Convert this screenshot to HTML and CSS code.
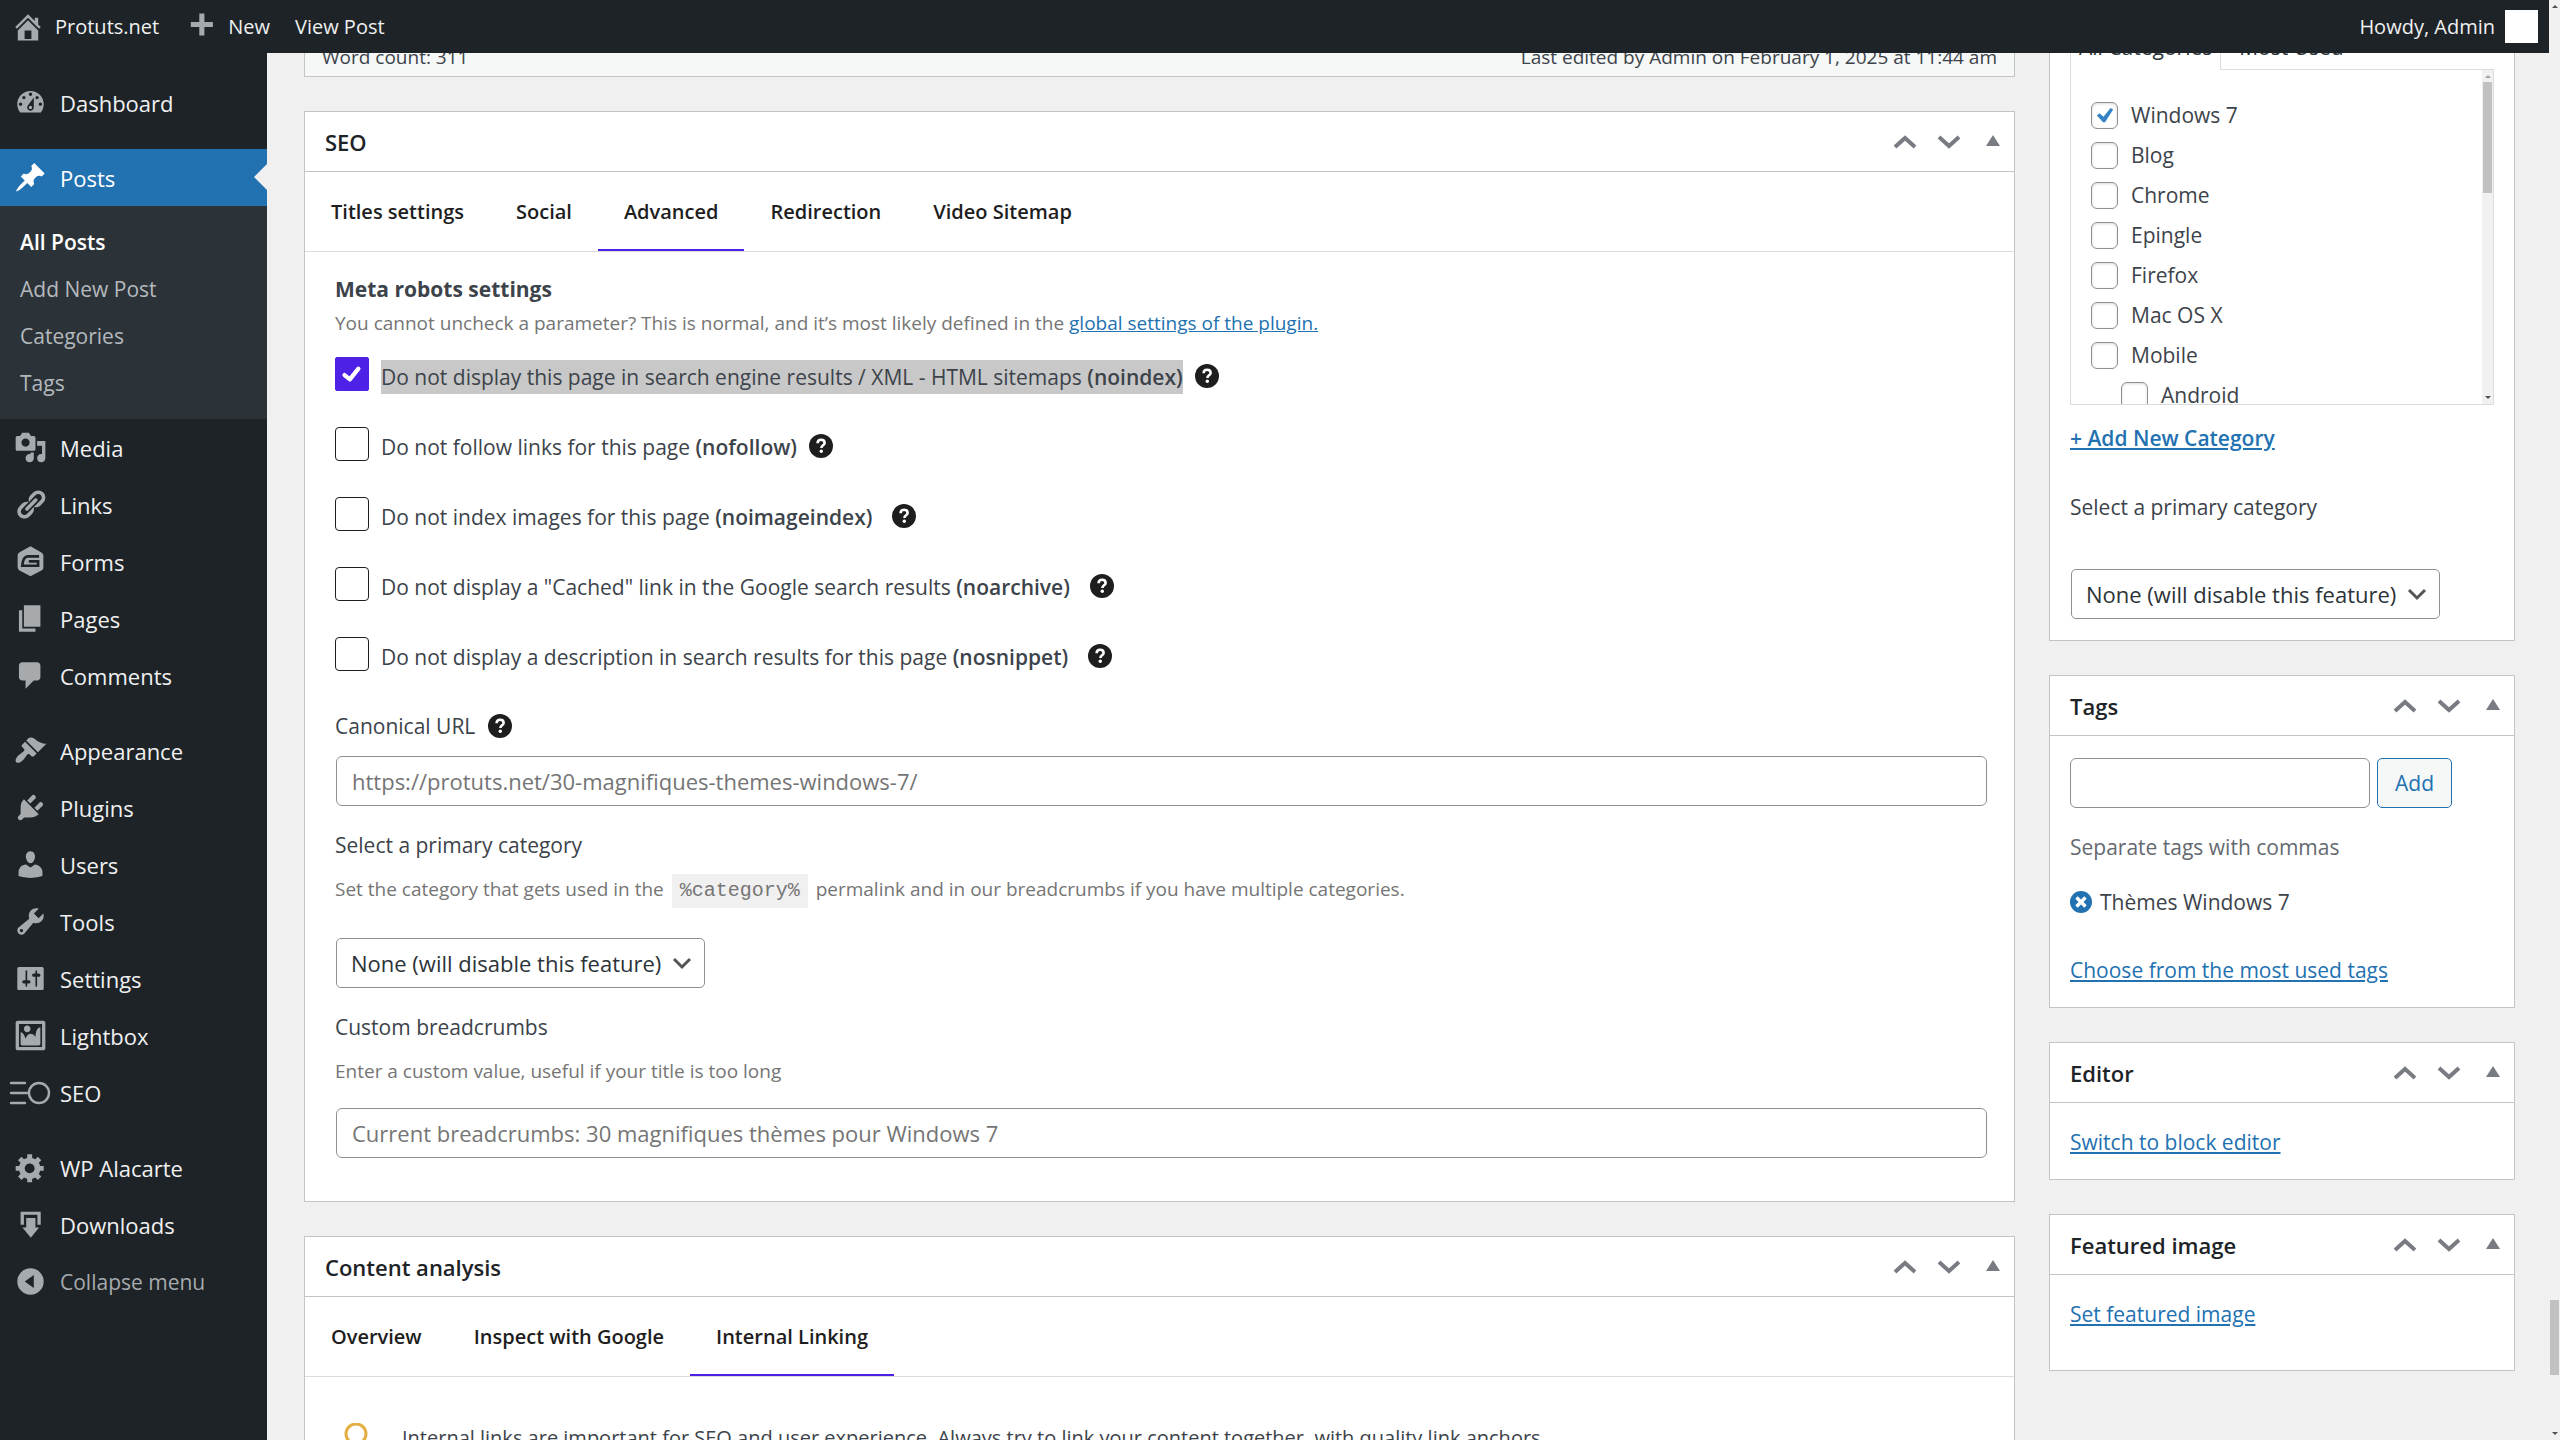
FILE: index.html
```html
<!DOCTYPE html>
<html lang="en">

<head>
    <meta charset="UTF-8">
    <meta name="viewport" content="width=device-width, initial-scale=1.0">
    <title>Edit Post</title>
    <link rel="stylesheet" href="styles.css">
</head>

<body>
    <!-- Shared icons for the panel headers and help buttons -->
    <svg class="sprite" aria-hidden="true">
        <symbol id="i-up" viewBox="0 0 24 24"><path d="M2 17l10-9 10 9" fill="none" stroke="#787c82" stroke-width="4"/></symbol>
        <symbol id="i-down" viewBox="0 0 24 24"><path d="M2 7l10 9 10-9" fill="none" stroke="#787c82" stroke-width="4"/></symbol>
        <symbol id="i-toggle" viewBox="0 0 24 24"><path d="M12 5l7 11H5z" fill="#787c82"/></symbol>
        <symbol id="i-help" viewBox="0 0 24 24"><circle cx="12" cy="12" r="12" fill="#1e1e1e"/><path d="M8.600 9.200c0-2 1.500-3.400 3.500-3.400s3.500 1.300 3.500 3.100c0 2.500-3.200 2.400-3.200 5.100" fill="none" stroke="#fff" stroke-width="2.600"/><circle cx="12.300" cy="17.300" r="1.700" fill="#fff"/></symbol>
    </svg>

    <header class="adminbar">
        <a href="#" class="bar-item"><svg class="bar-icon" viewBox="0 0 20 20"><path d="M16 8.500l1.530 1.530-1.060 1.060L10 4.600l-6.470 6.490-1.060-1.060L10 2.500l4 4v-2h2v4zm-6-2.460l6 5.990V18H4v-5.970zM12 17v-5H8v5h4z"/></svg>Protuts.net</a>
        <a href="#" class="bar-item"><svg class="bar-icon" viewBox="0 0 20 20"><path d="M17 7v3h-5v5H9v-5H4V7h5V2h3v5h5z"/></svg>New</a>
        <a href="#" class="bar-item">View Post</a>
        <a href="#" class="bar-item bar-user">Howdy, Admin<span class="avatar"></span></a>
    </header>

    <nav class="sidebar">
        <a href="#" class="menu-item"><svg class="menu-icon" viewBox="0 0 20 20"><path fill-rule="evenodd" d="M3.760 16h12.480c1.100-1.370 1.760-3.110 1.760-5 0-4.420-3.580-8-8-8s-8 3.580-8 8c0 1.890.66 3.630 1.760 5zM10 4c.55 0 1 .45 1 1s-.45 1-1 1-1-.45-1-1 .45-1 1-1zM6 6c.55 0 1 .45 1 1s-.45 1-1 1-1-.45-1-1 .45-1 1-1zm8 0c.55 0 1 .45 1 1s-.45 1-1 1-1-.45-1-1 .45-1 1-1zm-5.370 5.550L12 7v6c0 1.100-.9 2-2 2s-2-.9-2-2c0-.57.24-1.080.63-1.450zM4 10c.55 0 1 .45 1 1s-.45 1-1 1-1-.45-1-1 .45-1 1-1zm12 0c.55 0 1 .45 1 1s-.45 1-1 1-1-.45-1-1 .45-1 1-1zm-5 3c0-.55-.45-1-1-1s-1 .45-1 1 .45 1 1 1 1-.45 1-1z"/></svg>Dashboard</a>
        <div class="separator"></div>
        <a href="#" class="menu-item current"><svg class="menu-icon" viewBox="0 0 20 20"><path d="M10.440 3.020l1.820-1.820 6.360 6.350-1.830 1.820c-1.050-.68-2.480-.57-3.410.36l-.75.75c-.92.93-1.040 2.350-.35 3.410l-1.830 1.820-2.410-2.410-2.800 2.790c-.42.42-3.380 2.710-3.800 2.290s1.860-3.390 2.280-3.810l2.790-2.790L4.100 9.360l1.830-1.820c1.050.69 2.480.57 3.400-.36l.75-.75c.93-.92 1.050-2.350.36-3.410z"/></svg>Posts</a>
        <div class="submenu">
            <a href="#" class="active">All Posts</a>
            <a href="#">Add New Post</a>
            <a href="#">Categories</a>
            <a href="#">Tags</a>
        </div>
        <a href="#" class="menu-item"><svg class="menu-icon" viewBox="0 0 20 20"><path d="M13 11V4c0-.55-.45-1-1-1h-1.670L9 1H5L3.670 3H2c-.55 0-1 .45-1 1v7c0 .55.45 1 1 1h10c.55 0 1-.45 1-1zM7 4.500c1.380 0 2.500 1.120 2.500 2.500S8.380 9.500 7 9.500 4.500 8.380 4.500 7 5.620 4.500 7 4.500zM14 6h5v10.500c0 1.380-1.120 2.500-2.500 2.500S14 17.880 14 16.500s1.120-2.500 2.500-2.500c.17 0 .34.02.5.05V9h-3V6zm-4 8.050V13h2v3.500c0 1.380-1.120 2.500-2.500 2.500S7 17.880 7 16.500 8.120 14 9.500 14c.17 0 .34.02.5.05z"/></svg>Media</a>
        <a href="#" class="menu-item"><svg class="menu-icon" viewBox="0 0 20 20"><path d="M17.740 2.760c1.680 1.690 1.680 4.410 0 6.100l-1.530 1.520c-1.120 1.120-2.700 1.470-4.140 1.090l2.620-2.610.76-.77.76-.76c.84-.84.84-2.200 0-3.040-.84-.85-2.200-.85-3.040 0l-.77.76-3.380 3.380c-.37-1.440-.02-3.020 1.100-4.140l1.520-1.530c1.690-1.680 4.420-1.680 6.100 0zM8.590 13.430l5.340-5.340c.42-.42.42-1.100 0-1.520-.44-.43-1.130-.39-1.530 0l-5.330 5.340c-.42.42-.42 1.100 0 1.520.44.43 1.130.39 1.520 0zm-.76 2.290l4.140-4.150c.38 1.440.03 3.020-1.090 4.140l-1.520 1.530c-1.690 1.680-4.410 1.680-6.100 0-1.680-1.680-1.680-4.420 0-6.100l1.530-1.520c1.120-1.120 2.700-1.470 4.140-1.100l-4.140 4.150c-.85.84-.85 2.200 0 3.050.84.84 2.200.84 3.040 0z"/></svg>Links</a>
        <a href="#" class="menu-item"><svg class="menu-icon" viewBox="0 0 20 20"><path d="M10 .8l6.600 3.700c.8.500 1.200 1.100 1.200 2v7c0 .9-.4 1.500-1.200 2L10 19l-6.600-3.600c-.8-.5-1.200-1.100-1.200-2v-7c0-.9.4-1.500 1.200-2z"/><path d="M15.200 6.900H8.400C6.300 6.900 5.300 9 5 12.600h9.600V9.900H9" fill="none" stroke="#1d2327" stroke-width="1.600"/></svg>Forms</a>
        <a href="#" class="menu-item"><svg class="menu-icon" viewBox="0 0 20 20"><path d="M6 15V2h10v13H6zm-1 1h8v2H3V5h2v11z"/></svg>Pages</a>
        <a href="#" class="menu-item"><svg class="menu-icon" viewBox="0 0 20 20"><path d="M5 2h9c1.100 0 2 .9 2 2v7c0 1.100-.9 2-2 2h-2l-5 5v-5H5c-1.100 0-2-.9-2-2V4c0-1.100.9-2 2-2z"/></svg>Comments</a>
        <div class="separator"></div>
        <a href="#" class="menu-item"><svg class="menu-icon" viewBox="0 0 20 20"><path d="M14.480 11.060L7.410 3.990l1.500-1.500c.5-.56 2.300-.47 3.510.32 1.210.8 1.430 1.280 2.910 2.100 1.180.64 2.450 1.260 4.450.85zm-.71.71L6.700 4.700 4.930 6.470c-.39.39-.39 1.020 0 1.410l1.060 1.060c.39.39.39 1.030 0 1.420-.6.6-1.430 1.110-2.210 1.690-.35.26-.7.53-1.010.84C1.430 14.230.4 16.080 1.400 17.070c.99 1 2.840-.03 4.180-1.360.31-.31.58-.66.85-1.020.57-.78 1.080-1.610 1.690-2.210.39-.39 1.020-.39 1.410 0l1.060 1.060c.39.39 1.020.39 1.410 0z"/></svg>Appearance</a>
        <a href="#" class="menu-item"><svg class="menu-icon" viewBox="0 0 20 20"><path d="M13.110 4.360L9.870 7.600 8 5.730l3.240-3.240c.35-.34 1.050-.2 1.560.32.52.51.66 1.210.31 1.550zm-8 1.770l.91-1.120 9.010 9.010-1.190.84c-.71.71-2.630 1.160-3.820 1.160H6.140L4.900 17.260c-.59.59-1.540.59-2.120 0-.59-.58-.59-1.530 0-2.120l1.240-1.240v-3.880c0-1.130.4-3.190 1.090-3.890zm7.260 3.970l3.240-3.240c.34-.35 1.040-.21 1.550.31.52.51.66 1.210.31 1.550l-3.240 3.250z"/></svg>Plugins</a>
        <a href="#" class="menu-item"><svg class="menu-icon" viewBox="0 0 20 20"><path d="M10 9.250c-2.270 0-2.730-3.440-2.730-3.440C7 4.020 7.820 2 9.970 2c2.160 0 2.980 2.020 2.710 3.810 0 0-.41 3.440-2.680 3.440zm0 2.570L12.720 10c2.390 0 4.520 2.330 4.520 4.530v2.490s-3.650 1.130-7.240 1.130c-3.650 0-7.240-1.130-7.240-1.130v-2.490c0-2.250 1.940-4.480 4.470-4.480z"/></svg>Users</a>
        <a href="#" class="menu-item"><svg class="menu-icon" viewBox="0 0 20 20"><path fill-rule="evenodd" d="M16.680 9.770c-1.340 1.340-3.300 1.670-4.950.99l-5.410 6.520c-.99.99-2.590.99-3.580 0s-.99-2.590 0-3.570l6.520-5.420c-.68-1.650-.35-3.610.99-4.950 1.280-1.280 3.120-1.620 4.720-1.060l-2.890 2.890 2.820 2.820 2.860-2.870c.53 1.580.18 3.390-1.080 4.650zM3.810 16.210c.4.39 1.040.39 1.430 0 .4-.4.4-1.040 0-1.430-.39-.4-1.030-.4-1.430 0-.39.39-.39 1.030 0 1.430z"/></svg>Tools</a>
        <a href="#" class="menu-item"><svg class="menu-icon" viewBox="0 0 20 20"><path fill-rule="evenodd" d="M18 16V4c0-.55-.45-1-1-1H3c-.55 0-1 .45-1 1v12c0 .55.45 1 1 1h14c.55 0 1-.45 1-1zM8 11h1c.55 0 1 .45 1 1s-.45 1-1 1H8v1.500c0 .28-.22.5-.5.5s-.5-.22-.5-.5V13H6c-.55 0-1-.45-1-1s.45-1 1-1h1V5.500c0-.28.22-.5.5-.5s.5.22.5.5V11zm5-2h-1c-.55 0-1-.45-1-1s.45-1 1-1h1V5.500c0-.28.22-.5.5-.5s.5.22.5.5V7h1c.55 0 1 .45 1 1s-.45 1-1 1h-1v5.500c0 .28-.22.5-.5.5s-.5-.22-.5-.5V9z"/></svg>Settings</a>
        <a href="#" class="menu-item"><svg class="menu-icon" viewBox="0 0 20 20"><path fill-rule="evenodd" d="M2.250 1h15.500c.69 0 1.250.56 1.250 1.250v15.500c0 .69-.56 1.250-1.250 1.250H2.250C1.560 19 1 18.440 1 17.750V2.250C1 1.560 1.560 1 2.250 1zM17 17V3H3v14h14z"/><path d="M10 6c0-1.100-.9-2-2-2s-2 .9-2 2 .9 2 2 2 2-.9 2-2zm3 5s0-6 3-6v10c0 .55-.45 1-1 1H5c-.55 0-1-.45-1-1V8c2 0 3 4 3 4s1-3 3-3 3 2 3 2z"/></svg>Lightbox</a>
        <a href="#" class="menu-item menu-seo"><svg class="seo-icon" viewBox="0 0 42 24"><g fill="none" stroke="#a7aaad" stroke-width="2.400" stroke-linecap="round"><path d="M2 2h14M2 12h17M2 22h14"/><circle cx="30" cy="12" r="10"/></g></svg>SEO</a>
        <div class="separator"></div>
        <a href="#" class="menu-item"><svg class="menu-icon" viewBox="0 0 20 20"><path fill-rule="evenodd" d="M18 12h-2.180c-.17.7-.44 1.350-.81 1.930l1.540 1.540-2.100 2.100-1.540-1.540c-.58.36-1.230.63-1.910.79V19H8v-2.180c-.68-.16-1.330-.43-1.910-.79l-1.540 1.540-2.120-2.120 1.540-1.540c-.36-.58-.63-1.230-.79-1.910H1V9.030h2.170c.16-.7.44-1.350.8-1.940L2.430 5.550l2.100-2.100 1.540 1.540c.58-.37 1.240-.64 1.930-.81V2h3v2.180c.68.16 1.330.43 1.910.79l1.540-1.540 2.120 2.120-1.540 1.540c.36.59.64 1.240.8 1.940H18V12zm-8.500 1.500c1.660 0 3-1.340 3-3s-1.340-3-3-3-3 1.340-3 3 1.340 3 3 3z"/></svg>WP Alacarte</a>
        <a href="#" class="menu-item"><svg class="menu-icon" viewBox="0 0 20 20"><path d="M4 2.200h12.200v8h-2V4.100H6v6.100H4z"/><path d="M7.400 6H13v5.800h2.200L10.200 18l-5.100-6.200h2.300z"/></svg>Downloads</a>
        <button type="button" class="menu-item collapse"><svg class="menu-icon" viewBox="0 0 20 20"><path fill-rule="evenodd" d="M10 2a8 8 0 100 16 8 8 0 000-16zM12 6v8l-5.500-4z"/></svg>Collapse menu</button>
    </nav>

    <main class="content">
        <div class="main-column">
            <div class="status-bar"><span>Word count: 311</span><span>Last edited by Admin on February 1, 2025 at 11:44 am</span></div>

            <section class="panel">
                <div class="panel-header">
                    <h2>SEO</h2>
                    <button type="button" aria-label="Move up"><svg><use href="#i-up"/></svg></button>
                    <button type="button" aria-label="Move down"><svg><use href="#i-down"/></svg></button>
                    <button type="button" aria-label="Toggle panel"><svg><use href="#i-toggle"/></svg></button>
                </div>
                <div class="tabs">
                    <a href="#">Titles settings</a>
                    <a href="#">Social</a>
                    <a href="#" class="selected">Advanced</a>
                    <a href="#">Redirection</a>
                    <a href="#">Video Sitemap</a>
                </div>
                <div class="seo-body">
                    <h3>Meta robots settings</h3>
                    <p class="hint">You cannot uncheck a parameter? This is normal, and it’s most likely defined in the <a href="#">global settings of the plugin.</a></p>

                    <div class="robots">
                        <div class="robot-row">
                            <input type="checkbox" id="noindex" checked>
                            <label for="noindex" class="highlight">Do not display this page in search engine results / XML - HTML sitemaps <strong>(noindex)</strong></label>
                            <button type="button" class="help" aria-label="Help"><svg><use href="#i-help"/></svg></button>
                        </div>
                        <div class="robot-row">
                            <input type="checkbox" id="nofollow">
                            <label for="nofollow">Do not follow links for this page <strong>(nofollow)</strong></label>
                            <button type="button" class="help" aria-label="Help"><svg><use href="#i-help"/></svg></button>
                        </div>
                        <div class="robot-row wide">
                            <input type="checkbox" id="noimageindex">
                            <label for="noimageindex">Do not index images for this page <strong>(noimageindex)</strong></label>
                            <button type="button" class="help" aria-label="Help"><svg><use href="#i-help"/></svg></button>
                        </div>
                        <div class="robot-row wide">
                            <input type="checkbox" id="noarchive">
                            <label for="noarchive">Do not display a "Cached" link in the Google search results <strong>(noarchive)</strong></label>
                            <button type="button" class="help" aria-label="Help"><svg><use href="#i-help"/></svg></button>
                        </div>
                        <div class="robot-row wide">
                            <input type="checkbox" id="nosnippet">
                            <label for="nosnippet">Do not display a description in search results for this page <strong>(nosnippet)</strong></label>
                            <button type="button" class="help" aria-label="Help"><svg><use href="#i-help"/></svg></button>
                        </div>
                    </div>

                    <div class="field canonical">
                        <div class="label-row">
                            <label for="canonical">Canonical URL</label>
                            <button type="button" class="help" aria-label="Help"><svg><use href="#i-help"/></svg></button>
                        </div>
                        <input type="text" id="canonical" placeholder="https://protuts.net/30-magnifiques-themes-windows-7/">
                    </div>
                    <div class="field primary">
                        <label for="primary">Select a primary category</label>
                        <p class="hint">Set the category that gets used in the <code>%category%</code> permalink and in our breadcrumbs if you have multiple categories.</p>
                        <select id="primary"><option>None (will disable this feature)</option></select>
                    </div>
                    <div class="field breadcrumbs">
                        <label for="breadcrumbs">Custom breadcrumbs</label>
                        <p class="hint">Enter a custom value, useful if your title is too long</p>
                        <input type="text" id="breadcrumbs" placeholder="Current breadcrumbs: 30 magnifiques thèmes pour Windows 7">
                    </div>
                </div>
            </section>

            <section class="panel">
                <div class="panel-header">
                    <h2>Content analysis</h2>
                    <button type="button" aria-label="Move up"><svg><use href="#i-up"/></svg></button>
                    <button type="button" aria-label="Move down"><svg><use href="#i-down"/></svg></button>
                    <button type="button" aria-label="Toggle panel"><svg><use href="#i-toggle"/></svg></button>
                </div>
                <div class="tabs">
                    <a href="#">Overview</a>
                    <a href="#">Inspect with Google</a>
                    <a href="#" class="selected">Internal Linking</a>
                </div>
                <div class="notice">
                    <svg class="bulb" viewBox="0 0 24 34"><path d="M8 24v-4c-4-2-6-5-6-9a10 10 0 0120 0c0 4-2 7-6 9v4zM8 29h8" fill="none" stroke="#e5ae43" stroke-width="3"/></svg>
                    <p>Internal links are important for SEO and user experience. Always try to link your content together, with quality link anchors.</p>
                </div>
            </section>
        </div>

        <aside class="side-column">
            <section class="panel categories">
                <div class="cat-tabs">
                    <a href="#" class="selected">All Categories</a>
                    <a href="#">Most Used</a>
                </div>
                <div class="cat-box">
                    <div class="cat-list">
                        <label><input type="checkbox" checked>Windows 7</label>
                        <label><input type="checkbox">Blog</label>
                        <label><input type="checkbox">Chrome</label>
                        <label><input type="checkbox">Epingle</label>
                        <label><input type="checkbox">Firefox</label>
                        <label><input type="checkbox">Mac OS X</label>
                        <label><input type="checkbox">Mobile</label>
                        <label class="child"><input type="checkbox">Android</label>
                    </div>
                    <div class="scrollbar">
                        <span class="arrow arrow-up"></span>
                        <span class="thumb"></span>
                        <span class="arrow arrow-down"></span>
                    </div>
                </div>
                <a href="#" class="add-category">+ Add New Category</a>
                <label for="side-primary" class="side-label">Select a primary category</label>
                <select id="side-primary"><option>None (will disable this feature)</option></select>
            </section>

            <section class="panel">
                <div class="panel-header">
                    <h2>Tags</h2>
                    <button type="button" aria-label="Move up"><svg><use href="#i-up"/></svg></button>
                    <button type="button" aria-label="Move down"><svg><use href="#i-down"/></svg></button>
                    <button type="button" aria-label="Toggle panel"><svg><use href="#i-toggle"/></svg></button>
                </div>
                <div class="side-body">
                    <div class="tag-form">
                        <input type="text" aria-label="Add new tag">
                        <button type="button">Add</button>
                    </div>
                    <p class="tag-hint">Separate tags with commas</p>
                    <div class="tag">
                        <button type="button" aria-label="Remove tag"><svg viewBox="0 0 22 22"><circle cx="11" cy="11" r="11" fill="#2271b1"/><path d="M6.500 6.500l9 9M15.500 6.500l-9 9" stroke="#fff" stroke-width="3.400"/></svg></button>
                        Thèmes Windows 7
                    </div>
                    <a href="#">Choose from the most used tags</a>
                </div>
            </section>

            <section class="panel">
                <div class="panel-header">
                    <h2>Editor</h2>
                    <button type="button" aria-label="Move up"><svg><use href="#i-up"/></svg></button>
                    <button type="button" aria-label="Move down"><svg><use href="#i-down"/></svg></button>
                    <button type="button" aria-label="Toggle panel"><svg><use href="#i-toggle"/></svg></button>
                </div>
                <div class="side-body"><a href="#">Switch to block editor</a></div>
            </section>

            <section class="panel">
                <div class="panel-header">
                    <h2>Featured image</h2>
                    <button type="button" aria-label="Move up"><svg><use href="#i-up"/></svg></button>
                    <button type="button" aria-label="Move down"><svg><use href="#i-down"/></svg></button>
                    <button type="button" aria-label="Toggle panel"><svg><use href="#i-toggle"/></svg></button>
                </div>
                <div class="side-body featured"><a href="#">Set featured image</a></div>
            </section>
        </aside>
    </main>

    <div class="scrollbar page-scrollbar">
        <span class="arrow arrow-up"></span>
        <span class="thumb"></span>
        <span class="arrow arrow-down"></span>
    </div>
</body>

</html>
```
FILE: styles.css
```css
* {
    margin: 0;
    padding: 0;
    box-sizing: border-box;
}

body {
    font-family: "Open Sans", "Noto Sans", sans-serif;
    font-size: 21px;
    line-height: 34px;
    color: #3c434a;
    background-color: #f0f0f1;
    height: 100vh;
    overflow: hidden;
}

a {
    color: #2271b1;
}

button,
input,
select {
    font-family: inherit;
    font-size: 22px;
}

button {
    background: none;
    border: none;
    cursor: pointer;
}

.sprite {
    display: none;
}

/* Admin bar */
.adminbar {
    position: fixed;
    top: 0;
    left: 0;
    right: 11px;
    z-index: 10;
    height: 53px;
    padding: 0 11px;
    display: flex;
    align-items: center;
    gap: 25px;
    font-size: 20px;
    background-color: #1d2327;
}

.bar-item {
    display: flex;
    align-items: center;
    gap: 10px;
    color: #f0f0f1;
    text-decoration: none;
}

.bar-icon {
    width: 34px;
    height: 34px;
    fill: #a7aaad;
}

.bar-user {
    margin-left: auto;
}

.avatar {
    width: 33px;
    height: 33px;
    background-color: #fff;
}

/* Left menu */
.sidebar {
    position: fixed;
    top: 0;
    left: 0;
    bottom: 0;
    width: 267px;
    padding-top: 74px;
    background-color: #1d2327;
}

.menu-item {
    display: flex;
    align-items: center;
    gap: 13px;
    width: 100%;
    height: 57px;
    padding-left: 14px;
    font-size: 22px;
    color: #f0f0f1;
    text-decoration: none;
}

.menu-icon {
    width: 33px;
    height: 33px;
    fill: #a7aaad;
}

.menu-seo {
    gap: 9px;
    padding-left: 9px;
}

.seo-icon {
    width: 42px;
    height: 24px;
}

.separator {
    height: 18px;
}

.current {
    position: relative;
    color: #fff;
    background-color: #2271b1;
}

.current .menu-icon {
    fill: #fff;
}

/* Notch pointing at the current item */
.current::after {
    content: "";
    position: absolute;
    right: 0;
    top: 15px;
    border: 13px solid transparent;
    border-left-width: 0;
    border-right-color: #f0f0f1;
}

.submenu {
    padding: 13px 0 12px 20px;
    background-color: #2c3338;
}

.submenu a {
    display: block;
    line-height: 47px;
    color: #b4b9be;
    text-decoration: none;
}

.submenu .active {
    color: #fff;
    font-weight: 600;
}

.collapse {
    font-size: 21px;
    color: #a7aaad;
}

/* Page layout */
.content {
    display: flex;
    align-items: flex-start;
    gap: 34px;
    margin: 20px 11px 0 267px;
    padding: 0 34px 0 37px;
}

.main-column {
    flex: 1;
    min-width: 0;
}

.side-column {
    width: 466px;
}

.status-bar {
    display: flex;
    justify-content: space-between;
    height: 57px;
    margin-bottom: 34px;
    padding: 19px 17px 0;
    font-size: 19px;
    background-color: #f6f7f7;
    border: 1px solid #c3c4c7;
}

.panel {
    margin-bottom: 34px;
    background-color: #fff;
    border: 1px solid #c3c4c7;
}

.panel-header {
    display: flex;
    align-items: center;
    height: 60px;
    padding: 0 9px 0 20px;
    border-bottom: 1px solid #c3c4c7;
}

.panel-header h2 {
    flex: 1;
    font-size: 22px;
    font-weight: 600;
    color: #1d2327;
}

.panel-header button {
    height: 24px;
    margin-left: 20px;
}

.panel-header svg {
    display: block;
    width: 24px;
    height: 24px;
}

/* Tabs */
.tabs {
    display: flex;
    height: 80px;
    border-bottom: 1px solid #dcdcde;
}

.tabs a {
    padding: 0 26px;
    line-height: 80px;
    font-size: 20px;
    font-weight: 600;
    color: #1e1e1e;
    text-decoration: none;
}

.tabs .selected {
    border-bottom: 2px solid #4e21e7;
}

/* SEO panel */
.seo-body {
    padding: 20px 28px 43px 30px;
}

.seo-body h3 {
    font-size: 21px;
    font-weight: 700;
}

.hint {
    font-size: 19px;
    color: #757575;
}

.hint code {
    display: inline-block;
    margin: 0 3px;
    padding: 0 8px;
    font-family: "Liberation Mono", monospace;
    font-size: 20px;
    background-color: #f0f0f1;
}

.robots {
    display: flex;
    flex-direction: column;
    gap: 33px;
    margin-top: 17px;
}

.robot-row {
    display: flex;
    height: 37px;
}

.robot-row label {
    align-self: flex-end;
    margin: 0 12px;
}

.wide label {
    margin-right: 20px;
}

.robot-row .highlight {
    background-color: #c8c8c8;
}

.robot-row strong {
    font-weight: 600;
}

.robot-row input {
    appearance: none;
    width: 34px;
    height: 34px;
    border: 1px solid #1e1e1e;
    border-radius: 4px;
}

.robot-row input:checked {
    border-color: #4e21e7;
    border-radius: 2px;
    background: #4e21e7 url("data:image/svg+xml,%3Csvg xmlns='http://www.w3.org/2000/svg' viewBox='0 0 30 30'%3E%3Cpath d='M8 16l5 4L21 10' fill='none' stroke='%23fff' stroke-width='4' stroke-linecap='round' stroke-linejoin='round'/%3E%3C/svg%3E");
}

.help {
    display: flex;
    align-items: center;
}

.help svg {
    width: 24px;
    height: 24px;
}

.label-row {
    display: flex;
    gap: 13px;
    margin-bottom: 13px;
}

.field label {
    display: block;
}

.field input,
.field select {
    display: block;
    margin-left: 1px;
}

.field input,
.tag-form input {
    width: 100%;
    height: 50px;
    padding: 0 15px;
    border: 1px solid #8c8f94;
    border-radius: 6px;
}

.field input::placeholder {
    color: #757575;
}

.canonical {
    margin-top: 35px;
}

.primary {
    margin-top: 22px;
}

.field .hint {
    margin-top: 10px;
}

.primary .hint {
    margin-bottom: 30px;
}

.breadcrumbs {
    margin-top: 22px;
}

.breadcrumbs .hint {
    margin-bottom: 20px;
}

select {
    appearance: none;
    width: 369px;
    height: 50px;
    padding-left: 14px;
    color: #2c3338;
    border: 1px solid #8c8f94;
    border-radius: 5px;
    background: #fff url("data:image/svg+xml,%3Csvg xmlns='http://www.w3.org/2000/svg' viewBox='0 0 20 20'%3E%3Cpath d='M2 6l8 8 8-8' fill='none' stroke='%23555' stroke-width='3'/%3E%3C/svg%3E") no-repeat right 12px center / 20px 20px;
}

/* Content analysis */
.notice {
    display: flex;
    gap: 34px;
    padding: 44px 39px;
    font-size: 20px;
}

.bulb {
    width: 24px;
    height: 34px;
    margin-top: 2px;
}

/* Category panel */
.categories {
    padding: 9px 20px 21px;
}

.cat-tabs {
    display: flex;
    height: 40px;
}

.cat-tabs a {
    padding: 0 18px;
    color: #2c3338;
    text-decoration: none;
    border-bottom: 1px solid #dcdcde;
}

.cat-tabs a:last-child {
    flex: 1;
    border-left: 1px solid #dcdcde;
}

.cat-tabs .selected {
    padding: 0 8px;
    border-left: 1px solid #dcdcde;
    border-bottom: none;
}

.cat-box {
    display: flex;
    height: 335px;
    overflow: hidden;
    border: 1px solid #dcdcde;
    border-top: none;
}

.cat-list {
    flex: 1;
    padding: 25px 20px;
}

.cat-list label {
    display: flex;
    align-items: center;
    gap: 13px;
    height: 40px;
}

.cat-list .child {
    padding-left: 30px;
}

.cat-list input {
    appearance: none;
    width: 27px;
    height: 27px;
    border: 1px solid #8c8f94;
    border-radius: 6px;
    box-shadow: inset 0 1px 3px rgba(0, 0, 0, 0.15);
}

.cat-list input:checked {
    background: url("data:image/svg+xml,%3Csvg xmlns='http://www.w3.org/2000/svg' viewBox='0 0 20 20'%3E%3Cpath d='M14.830 3.900l2.100 1.200-6.500 10.300H8.800L3.900 9.900l2.100-1.800 3.200 2.900z' fill='%233582c4'/%3E%3C/svg%3E");
}

.add-category {
    display: block;
    margin: 16px 0 35px;
    font-weight: 600;
}

.side-label {
    display: block;
    margin-bottom: 45px;
}

.categories select {
    margin-left: 1px;
}

/* Drawn scrollbars */
.scrollbar {
    display: flex;
    flex-direction: column;
    align-items: center;
    width: 11px;
    padding: 5px 0;
    background-color: #f1f1f1;
}

.arrow {
    border: 3px solid transparent;
}

.arrow-up {
    border-top: none;
    border-bottom-color: #a3a3a3;
}

.arrow-down {
    margin-top: auto;
    border-bottom: none;
    border-top-color: #505050;
}

.thumb {
    width: 9px;
    height: 111px;
    margin-top: 4px;
    background-color: #c1c1c1;
}

.page-scrollbar {
    position: fixed;
    top: 0;
    right: 0;
    bottom: 0;
}

.page-scrollbar .thumb {
    height: 75px;
    margin-top: auto;
}

.page-scrollbar .arrow-up {
    border-bottom-color: #505050;
}

.page-scrollbar .arrow-down {
    margin-top: 57px;
}

/* Side panels */
.side-body {
    padding: 22px 20px 20px;
}

.side-body > a {
    display: block;
}

.featured {
    padding-bottom: 39px;
}

.tag-form {
    display: flex;
    gap: 7px;
}

.tag-form input {
    width: 300px;
}

.tag-form button {
    width: 75px;
    height: 50px;
    font-size: 21px;
    color: #2271b1;
    background-color: #f6f7f7;
    border: 1px solid #2271b1;
    border-radius: 5px;
}

.tag-hint {
    margin-top: 22px;
    color: #646970;
}

.tag {
    display: flex;
    align-items: center;
    gap: 8px;
    margin: 21px 0 34px;
}

.tag button,
.tag svg {
    display: block;
    width: 22px;
    height: 22px;
}
```
